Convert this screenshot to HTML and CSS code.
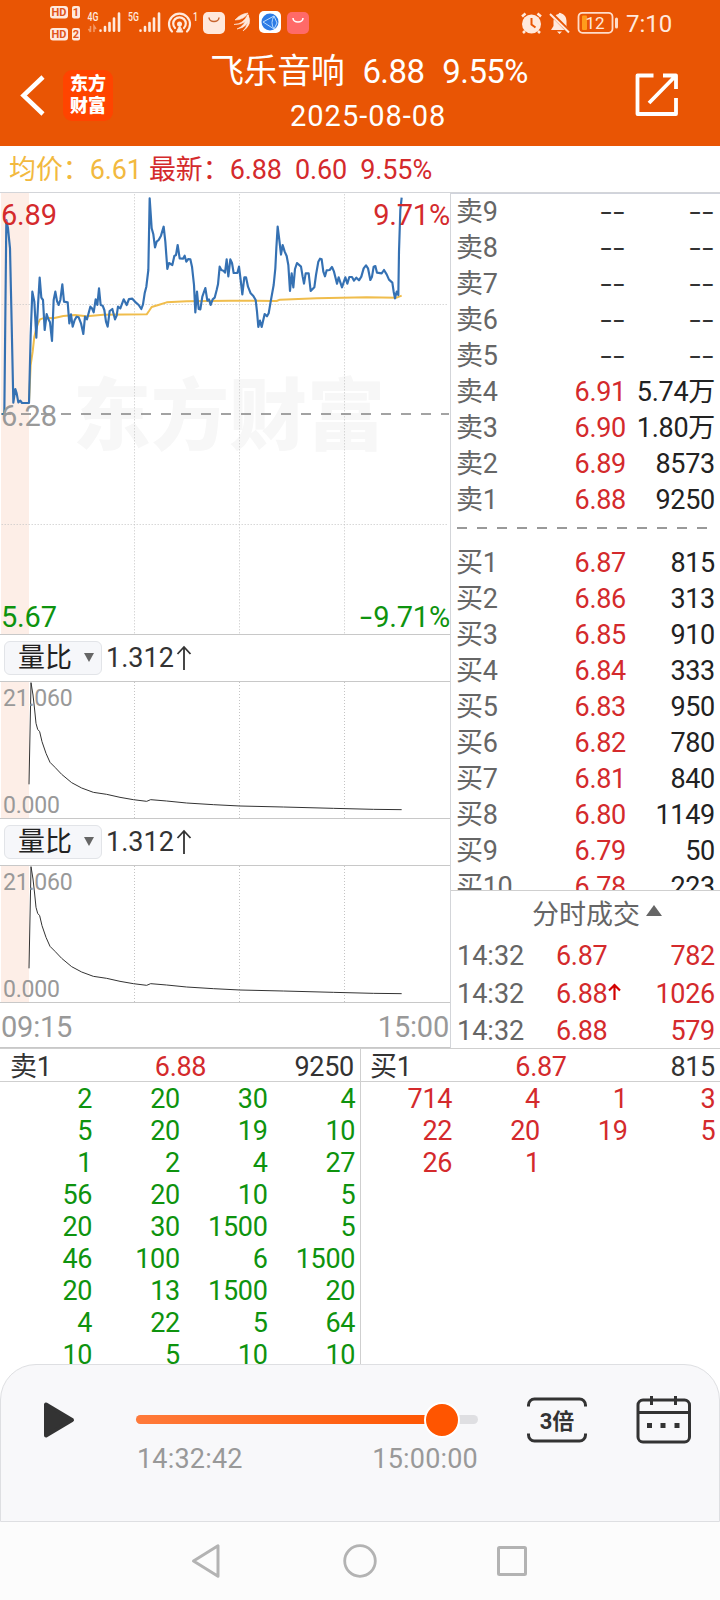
FILE: index.html
```html
<!DOCTYPE html>
<html lang="zh-CN">
<head>
    <meta charset="UTF-8">
    <meta name="viewport" content="width=device-width, initial-scale=1.0">
    <title>飞乐音响 2025-08-08</title>
    <link rel="stylesheet" href="styles.css">
</head>
<body>
    <header class="header">
        <div class="status-bar">
            <svg class="status-left" width="264" height="44" viewBox="48 0 264 44">
                <g fill="#ffe9dd">
                    <rect x="50" y="6" width="18" height="12.500" rx="3"/>
                    <rect x="72" y="6" width="8" height="12.500" rx="2"/>
                    <rect x="50" y="28" width="18" height="12.500" rx="3"/>
                    <rect x="72" y="28" width="8" height="12.500" rx="2"/>
                </g>
                <g class="hd-text">
                    <text x="59" y="16.300">HD</text><text x="76" y="16.300">1</text>
                    <text x="59" y="38.300">HD</text><text x="76" y="38.300">2</text>
                </g>
                <g class="net-text">
                    <text x="87.500" y="21">4G</text><text x="128" y="21">5G</text><text x="193" y="21">1</text>
                </g>
                <path d="M90.500 26v6M88.500 29l2 3M94 32v-6l2 3" stroke="#f39a68" stroke-width="1.500" fill="none"/>
                <g stroke="#ffe9dd" stroke-width="2.600" stroke-linecap="round">
                    <path d="M100.500 30.500v.3M105 27v3.800M109.500 23v7.800M114 18.500v12.300M119 13.500v17.300"/>
                    <path d="M140.500 30.500v.3M145 27v3.800M149.500 23v7.800M154 18.500v12.300M159 13.500v17.300"/>
                </g>
                <g fill="none" stroke="#ffe9dd" stroke-width="2.200" stroke-linecap="round">
                    <path d="M172 31.500a10.500 10.500 0 1 1 15 0M175 28a6.300 6.300 0 1 1 9 0"/>
                    <path d="M179.500 26l-3 6h6z" fill="#ffe9dd" stroke-width="1"/>
                </g>
                <circle cx="179.500" cy="24" r="2.500" fill="#ffe9dd"/>
                <rect x="203" y="12" width="22" height="22" rx="5" fill="#ffe9dd"/>
                <path d="M209 17.500a5 4 0 0 0 10 0" fill="none" stroke="#c7642f" stroke-width="1.500"/>
                <path d="M235 20q5-6 13-7-4 7-13 7zM234 24.500q9 0 14-10 0 10-14 10zM237 29q8-3 11-14 2 12-11 14zM243 31q6-6 5-16 5 9-5 16z" fill="#ffe9dd" stroke="#ffe9dd" stroke-width=".6"/>
                <rect x="259" y="11" width="22" height="22" rx="5" fill="#fff"/>
                <circle cx="270" cy="22" r="8.500" fill="#2c7be5"/>
                <path d="M263 22l11-6M263 22l11 7M274 16q-4 7 0 13M274 16l3 7-3 6" fill="none" stroke="#b9dcff" stroke-width="1"/>
                <rect x="287" y="12" width="22" height="22" rx="5" fill="#ff6a68"/>
                <path d="M293 18a5 4 0 0 0 10 0" fill="none" stroke="#fff" stroke-width="1.600"/>
            </svg>
            <svg class="status-right" width="100" height="44" viewBox="519 0 100 44">
                <circle cx="531.500" cy="24" r="9.500" fill="#ffe9dd"/>
                <path d="M531.500 18v6.500l4 3" fill="none" stroke="#e95504" stroke-width="2"/>
                <path d="M522 16.500l3.500-3M541 16.500l-3.500-3M525 31l-2 2M538 31l2 2" stroke="#ffe9dd" stroke-width="2.500"/>
                <path d="M551 30l2.500-4v-5q0-6 5-7 1-2 2-1 6 2 6 8v5l2.500 4zM557 31.500h5l-2.500 2.500z" fill="#ffe9dd"/>
                <path d="M551 13.500l19 19" stroke="#e95504" stroke-width="4"/>
                <path d="M550 14l19 18.500" stroke="#ffe9dd" stroke-width="2"/>
                <rect x="578.500" y="12.800" width="34" height="20" rx="4" fill="none" stroke="#ffdcc9" stroke-width="1.800"/>
                <rect x="582" y="15.500" width="5" height="14.500" rx="1" fill="#ff9d1c"/>
                <path d="M616.500 19v8" stroke="#ffdcc9" stroke-width="3" stroke-linecap="round"/>
                <text class="battery-text" x="595" y="29">12</text>
            </svg>
            <span class="clock">7:10</span>
        </div>
        <div class="title-bar">
            <div class="title-left">
                <svg width="28" height="44" viewBox="0 0 28 44"><path d="M23 4L3.500 22.500 23 41" fill="none" stroke="#fff" stroke-width="4.500"/></svg>
                <div class="logo">东方<br>财富</div>
            </div>
            <div class="title">
                <div class="stock"><span>飞乐音响</span><span>6.88</span><span>9.55%</span></div>
                <div class="date">2025-08-08</div>
            </div>
            <svg class="share" width="44" height="44" viewBox="0 0 44 44">
                <path d="M18.500 2.500h-16v38.500h38.500V25M28 2.500h13V16M41 2.500L14 30" fill="none" stroke="#fff" stroke-width="3.800" stroke-linejoin="round"/>
            </svg>
        </div>
    </header>

    <div class="info-bar">
        <span class="avg">均价：6.61</span>
        <span class="last">最新：6.88</span>
        <span class="last">0.60</span>
        <span class="last">9.55%</span>
    </div>

    <main class="main">
        <section class="charts">
            <div class="chart price-chart">
                <div class="watermark">东方财富</div>
                <!-- three units per pixel -->
                <svg width="450" height="441" viewBox="0 24 1350 1323">
                    <rect x="3" y="24" width="84" height="1323" fill="#fdeee7"/>
                    <g class="grid"><path d="M403.500 28V1347M718.500 28V1347M1033.500 28V1347M5 358.500H1345M5 1018.500H1345"/></g>
                    <path d="M3 687H1347" stroke="#858585" stroke-width="5" stroke-dasharray="30 30"/>
                    <polyline class="line-avg" points="87,654 92,540 98,500 103,455 109,430 114,415 120,403 135,398 160,400 190,393 225,390 260,394 310,389 440,388 447,378 455,366 475,360 500,352 560,349 690,347 830,348 840,344 950,340 1100,337 1190,338 1205,332"/>
                    <polyline class="line-price" points="6,687 13,687 19,105 24,130 30,190 34,370 40,653 46,612 50,625 55,652 61,647 66,654 87,654 92,450 97,320 103,350 109,458 114,360 119,278 124,338 129,345 134,435 140,387 145,402 150,412 156,468 161,345 166,320 171,348 176,360 181,345 187,298 192,350 203,352 208,415 213,388 218,425 224,405 230,395 236,397 243,415 250,447 255,395 261,403 271,365 276,370 281,382 287,343 292,360 297,310 302,360 308,362 313,375 318,410 323,425 329,378 337,372 345,403 350,392 354,365 361,370 371,343 380,360 387,342 397,341 408,353 416,360 424,372 429,358 434,325 439,305 445,255 449,40 455,130 460,148 465,187 470,170 476,165 483,152 491,125 496,170 502,252 507,234 517,240 523,213 528,210 533,180 539,220 549,221 554,212 559,230 565,222 571,223 576,245 582,300 586,382 591,320 596,372 601,373 607,335 616,309 622,347 627,343 632,360 638,343 644,338 650,315 654,298 659,245 664,255 670,257 675,263 680,223 685,274 691,223 696,234 701,264 712,264 717,245 722,285 727,328 733,277 738,277 744,305 752,325 760,333 767,345 771,380 775,426 780,407 785,426 794,387 801,394 806,385 812,350 821,300 826,250 829,190 833,125 838,165 843,209 848,180 854,200 860,213 865,240 870,318 875,265 880,307 885,252 891,234 903,245 908,275 912,296 917,265 926,265 932,318 943,307 948,270 955,230 960,221 965,223 970,260 975,274 980,256 989,255 996,246 1002,260 1011,296 1016,277 1026,307 1036,277 1042,296 1048,276 1056,276 1062,287 1069,278 1077,286 1084,275 1091,250 1098,241 1104,250 1111,285 1116,275 1121,245 1126,243 1131,263 1145,265 1152,255 1160,268 1167,284 1177,293 1181,320 1185,340 1190,320 1195,330 1197,200 1201,75 1205,38"/>
                </svg>
                <span class="mark top-left red">6.89</span>
                <span class="mark top-right red">9.71%</span>
                <span class="mark mid-left">6.28</span>
                <span class="mark bottom-left green">5.67</span>
                <span class="mark bottom-right green"><span class="dash">-</span>9.71%</span>
            </div>

            <div class="ratio-head">
                <div class="ratio-select">量比<i class="caret-down"></i></div>
                <span>1.312</span>
                <svg width="16" height="26" viewBox="0 0 16 26"><path d="M8 25V2M1.500 9L8 2l6.500 7" fill="none" stroke="#333" stroke-width="1.800"/></svg>
            </div>
            <div class="chart ratio-chart">
                <svg width="450" height="136" viewBox="0 246 1350 408">
                    <g id="ratio">
                        <rect x="3" y="246" width="84" height="408" fill="#fdeee7"/>
                        <g class="grid"><path d="M403.500 246V654M718.500 246V654M1033.500 246V654"/></g>
                        <polyline class="line-ratio" points="87,553 93,248 99,285 104,330 108,370 113,388 119,395 126,425 138,460 150,487 165,502 185,523 215,548 245,564 280,577 320,583 360,592 400,599 440,604 452,599 500,603 560,609 640,614 720,618 850,621 1000,625 1120,628 1205,629"/>
                    </g>
                </svg>
                <span class="mark small-top">21.060</span>
                <span class="mark small-bottom">0.000</span>
            </div>

            <div class="ratio-head">
                <div class="ratio-select">量比<i class="caret-down"></i></div>
                <span>1.312</span>
                <svg width="16" height="26" viewBox="0 0 16 26"><path d="M8 25V2M1.500 9L8 2l6.500 7" fill="none" stroke="#333" stroke-width="1.800"/></svg>
            </div>
            <div class="chart ratio-chart">
                <svg width="450" height="136" viewBox="0 246 1350 408"><use href="#ratio"/></svg>
                <span class="mark small-top">21.060</span>
                <span class="mark small-bottom">0.000</span>
            </div>
            <div class="time-axis"><span>09:15</span><span>15:00</span></div>
        </section>

        <section class="side">
            <div class="book">
                <div class="row"><span>卖9</span><b class="empty">--</b><em class="empty">--</em></div>
                <div class="row"><span>卖8</span><b class="empty">--</b><em class="empty">--</em></div>
                <div class="row"><span>卖7</span><b class="empty">--</b><em class="empty">--</em></div>
                <div class="row"><span>卖6</span><b class="empty">--</b><em class="empty">--</em></div>
                <div class="row"><span>卖5</span><b class="empty">--</b><em class="empty">--</em></div>
                <div class="row"><span>卖4</span><b>6.91</b><em>5.74万</em></div>
                <div class="row"><span>卖3</span><b>6.90</b><em>1.80万</em></div>
                <div class="row"><span>卖2</span><b>6.89</b><em>8573</em></div>
                <div class="row"><span>卖1</span><b>6.88</b><em>9250</em></div>
                <div class="divider"></div>
                <div class="row"><span>买1</span><b>6.87</b><em>815</em></div>
                <div class="row"><span>买2</span><b>6.86</b><em>313</em></div>
                <div class="row"><span>买3</span><b>6.85</b><em>910</em></div>
                <div class="row"><span>买4</span><b>6.84</b><em>333</em></div>
                <div class="row"><span>买5</span><b>6.83</b><em>950</em></div>
                <div class="row"><span>买6</span><b>6.82</b><em>780</em></div>
                <div class="row"><span>买7</span><b>6.81</b><em>840</em></div>
                <div class="row"><span>买8</span><b>6.80</b><em>1149</em></div>
                <div class="row"><span>买9</span><b>6.79</b><em>50</em></div>
                <div class="row"><span>买10</span><b>6.78</b><em>223</em></div>
            </div>
            <div class="trades">
                <div class="trades-head">分时成交<i class="caret-up"></i></div>
                <div class="trade"><span>14:32</span><b>6.87</b><em>782</em></div>
                <div class="trade"><span>14:32</span><b>6.88<svg width="13" height="18" viewBox="0 0 13 18"><path d="M6.500 17V2M1 7.500L6.500 2 12 7.500" fill="none" stroke="#d20000" stroke-width="2.200"/></svg></b><em>1026</em></div>
                <div class="trade"><span>14:32</span><b>6.88</b><em>579</em></div>
            </div>
        </section>
    </main>

    <section class="queues">
        <div class="queue sell">
            <div class="queue-head"><span>卖1</span><b>6.88</b><em>9250</em></div>
            <div class="cells">
                <span>2</span><span>20</span><span>30</span><span>4</span>
                <span>5</span><span>20</span><span>19</span><span>10</span>
                <span>1</span><span>2</span><span>4</span><span>27</span>
                <span>56</span><span>20</span><span>10</span><span>5</span>
                <span>20</span><span>30</span><span>1500</span><span>5</span>
                <span>46</span><span>100</span><span>6</span><span>1500</span>
                <span>20</span><span>13</span><span>1500</span><span>20</span>
                <span>4</span><span>22</span><span>5</span><span>64</span>
                <span>10</span><span>5</span><span>10</span><span>10</span>
            </div>
        </div>
        <div class="queue buy">
            <div class="queue-head"><span>买1</span><b>6.87</b><em>815</em></div>
            <div class="cells">
                <span>714</span><span>4</span><span>1</span><span>3</span>
                <span>22</span><span>20</span><span>19</span><span>5</span>
                <span>26</span><span>1</span>
            </div>
        </div>
    </section>

    <footer class="player">
        <svg class="play" width="32" height="38" viewBox="0 0 32 38"><path d="M2 3.500v31L28 19z" fill="#333" stroke="#333" stroke-width="4" stroke-linejoin="round"/></svg>
        <div class="progress">
            <div class="track"><div class="fill"></div><div class="thumb"></div></div>
            <div class="times"><span>14:32:42</span><span>15:00:00</span></div>
        </div>
        <svg class="speed" width="60" height="46" viewBox="0 0 60 46">
            <path d="M1.500 9.500V8a6 6 0 0 1 6-6h45a6 6 0 0 1 6 6v1.500M1.500 36.500V38a6 6 0 0 0 6 6h45a6 6 0 0 0 6-6v-1.500" fill="none" stroke="#333" stroke-width="3"/>
            <text x="30" y="32">3倍</text>
        </svg>
        <svg class="calendar" width="56" height="48" viewBox="0 0 56 48">
            <rect x="2" y="4" width="51.500" height="42" rx="5" fill="none" stroke="#333" stroke-width="3"/>
            <path d="M2 16.500h51.500M15.500 0v9M39.500 0v9" fill="none" stroke="#333" stroke-width="3"/>
            <path d="M11 27h5v5h-5zM24.500 27h5v5h-5zM38.500 27h5v5h-5z" fill="#333"/>
        </svg>
    </footer>

    <nav class="nav">
        <svg width="30" height="34" viewBox="0 0 30 34"><path d="M26 1.800v30.400L1.500 17z" fill="none" stroke="#b3b3b3" stroke-width="3" stroke-linejoin="round"/></svg>
        <svg width="34" height="34" viewBox="0 0 34 34"><circle cx="17" cy="17" r="15.300" fill="none" stroke="#b3b3b3" stroke-width="2.800"/></svg>
        <svg width="30" height="34" viewBox="1 0 30 34"><rect x="1.500" y="3.500" width="27" height="27" rx="1" fill="none" stroke="#b3b3b3" stroke-width="3"/></svg>
    </nav>
</body>
</html>
```
FILE: styles.css
```css
* {
    box-sizing: border-box;
}
body {
    margin: 0;
    width: 720px;
    height: 1600px;
    display: flex;
    flex-direction: column;
    overflow: hidden;
    background: #fff;
    color: #222;
    font-family: Roboto, "Noto Sans CJK SC", sans-serif;
    font-size: 27px;
    line-height: 36px;
}
svg {
    display: block;
    flex: none;
    overflow: visible;
}
b, em, i {
    font-weight: normal;
    font-style: normal;
}

/* header */
.header {
    height: 146px;
    background: #e95504;
    color: #fff;
}
.status-bar {
    display: flex;
    height: 44px;
    padding-left: 48px;
}
.status-right {
    margin-left: 207px;
}
.clock {
    margin-left: 7px;
    font-size: 24px;
    line-height: 48px;
    color: #ffe9dd;
}
.hd-text {
    font-size: 11px;
    font-weight: bold;
    fill: #e0551a;
    text-anchor: middle;
}
.net-text {
    font-size: 12.5px;
    font-weight: 500;
    fill: #ffe9dd;
}
.net-text text {
    transform-box: fill-box;
    transform: scaleX(.7);
}
.battery-text {
    font-size: 17px;
    text-anchor: middle;
    fill: #ffe9dd;
}
.title-bar {
    display: grid;
    grid-template-columns: 180px 1fr 180px;
    height: 102px;
}
.title-left {
    display: flex;
    align-items: center;
    gap: 15px;
    padding-left: 20px;
}
.logo {
    width: 50px;
    height: 51px;
    padding-top: 3px;
    border-radius: 9px;
    background: #ff4400;
    font-size: 18px;
    font-weight: 900;
    line-height: 22px;
    text-align: center;
}
.title {
    padding: 2px 0 0 18px;
}
.stock {
    display: flex;
    gap: 18px;
    padding-left: 12px;
    font-size: 33px;
    line-height: 51px;
    letter-spacing: -.6px;
    white-space: nowrap;
}
.stock span:first-child {
    font-size: 34px;
    letter-spacing: -.4px;
}
.date {
    margin-top: -1px;
    padding-left: 92px;
    font-size: 29px;
    line-height: 41px;
    letter-spacing: 1px;
}
.share {
    align-self: center;
    justify-self: end;
    margin-right: 41px;
}

.info-bar {
    display: flex;
    gap: 13px;
    height: 47px;
    padding-left: 9px;
    border-bottom: 1px solid #d3d5d9;
    line-height: 49px;
    letter-spacing: -.1px;
    white-space: nowrap;
}
.avg {
    margin-right: -6px;
    color: #f2b93f;
}
.last {
    color: #d42a2c;
}

/* charts */
.main {
    display: flex;
    height: 856px;
    border-bottom: 1px solid #cfcfcf;
}
.charts {
    width: 450px;
}
.chart {
    position: relative;
    border-bottom: 1px solid #c8c8c8;
}
.price-chart {
    height: 442px;
}
.price-chart svg {
    position: relative;
}
.ratio-chart {
    height: 137px;
}
.watermark {
    position: absolute;
    left: 73px;
    top: 167px;
    font-size: 78px;
    font-weight: 900;
    line-height: 116px;
    color: #f7f7f7;
}
.grid path {
    fill: none;
    stroke: #c4c4c4;
    stroke-width: 3;
    stroke-dasharray: 3 6;
}
.line-price, .line-avg, .line-ratio {
    fill: none;
    stroke-linejoin: round;
}
.line-price {
    stroke: #3571b3;
    stroke-width: 6.5;
}
.line-avg {
    stroke: #f0bd4c;
    stroke-width: 6;
}
.line-ratio {
    stroke: #333;
    stroke-width: 3;
}
.mark {
    position: absolute;
    color: #999;
    font-size: 29px;
    line-height: 30px;
    letter-spacing: -.2px;
}
.mark.red {
    color: #d42a2c;
}
.mark.green {
    color: #0e930e;
}
.top-left {
    left: 1px;
    top: 7px;
}
.top-right {
    right: 0;
    top: 7px;
}
.mid-left {
    left: 1px;
    top: 208px;
}
.bottom-left {
    left: 1px;
    bottom: 2px;
}
.bottom-right {
    right: 0;
    bottom: 2px;
}
.dash {
    display: inline-block;
    margin-right: 1px;
    transform: scaleX(1.5);
    transform-origin: right;
}
.small-top, .small-bottom {
    left: 3px;
    font-size: 23px;
}
.small-top {
    top: 2px;
}
.small-bottom {
    bottom: -3px;
}
.ratio-head {
    display: flex;
    align-items: center;
    height: 47px;
    padding: 0 0 1px 4px;
    border-bottom: 1px solid #c8c8c8;
    color: #333;
}
.ratio-head svg {
    margin-left: 2px;
}
.ratio-select {
    display: flex;
    align-items: center;
    justify-content: space-between;
    width: 98px;
    height: 34px;
    margin-right: 4px;
    padding: 0 7px 0 13px;
    border: 1px solid #e2e4e8;
    border-radius: 6px;
    background: #f6f7fa;
    color: #222;
}
.caret-down {
    border: 5.5px solid transparent;
    border-top: 9px solid #666;
    border-bottom: 0;
}
.time-axis {
    display: flex;
    justify-content: space-between;
    height: 45px;
    padding: 0 1px;
    border-bottom: 1px solid #c8c8c8;
    color: #999;
    font-size: 29px;
    line-height: 49px;
    letter-spacing: -.2px;
}

/* order book */
.side {
    flex: 1;
    border-left: 1px solid #d3d5d9;
    letter-spacing: -.3px;
}
.book {
    height: 698px;
    border-top: 1px solid #d0d3dc;
    border-bottom: 1px solid #cfcfcf;
    overflow: hidden;
}
.row {
    display: grid;
    grid-template-columns: 70px 99px 1fr;
    height: 36px;
    padding: 0 5px;
}
.row span, .trade span {
    color: #666;
}
.row b {
    padding-left: 1px;
    margin-right: -1px;
}
.row b, .row em {
    text-align: right;
}
.row b, .trade b, .trade em, .queue-head b {
    color: #d42a2c;
}
.row .empty {
    justify-self: end;
    color: #333;
    letter-spacing: 1px;
    transform: scaleX(1.5);
    transform-origin: right;
}
.divider {
    height: 2px;
    margin: 9px 12px 16px 6px;
    background: repeating-linear-gradient(90deg, #999 0 10px, transparent 10px 20px);
}
.trades-head {
    display: flex;
    justify-content: center;
    align-items: center;
    gap: 6px;
    height: 46px;
    padding: 1px 0 0 23px;
    color: #666;
    letter-spacing: 0;
}
.caret-up {
    margin-top: -9px;
    border: 8px solid transparent;
    border-top: 0;
    border-bottom: 11px solid #666;
}
.trade {
    display: grid;
    grid-template-columns: 98px 90px 1fr;
    height: 37.5px;
    padding: 0 5px 0 6px;
    line-height: 39px;
}
.trade span {
    letter-spacing: 0;
}
.trade b {
    display: flex;
    gap: 1px;
    padding-left: 1px;
}
.trade svg {
    margin-top: 8px;
}
.trade em {
    text-align: right;
}

/* order queues */
.queues {
    display: flex;
    height: 315px;
    overflow: hidden;
    letter-spacing: -.3px;
}
.queue {
    width: 361px;
    flex: none;
}
.sell {
    border-right: 1px solid #cfcfcf;
}
.queue-head {
    display: grid;
    grid-template-columns: 1fr 1fr 1fr;
    height: 33px;
    padding: 0 6px 0 10px;
    border-bottom: 1px solid #cfcfcf;
    color: #333;
    line-height: 36px;
}
.queue-head b {
    margin-left: -3px;
    text-align: center;
}
.queue-head em {
    text-align: right;
}
.cells {
    display: grid;
    grid-template-columns: repeat(4, 87.7px);
    padding: 1px 0 0 4.5px;
    line-height: 32px;
    text-align: right;
    color: #0e930e;
}
.buy {
    width: 359px;
}
.buy .queue-head {
    padding: 0 5px 0 9px;
}
.buy .cells {
    color: #d42a2c;
    padding-left: 3.5px;
}

/* player */
.player {
    display: flex;
    height: 158px;
    padding: 31px 27px 0 43px;
    border: 1px solid #dedfe2;
    border-radius: 36px 36px 0 0;
    background: #f8f8fa;
}
.play {
    margin-top: 5px;
}
.progress {
    width: 342px;
    margin: 19px 0 0 60px;
}
.track {
    position: relative;
    height: 9px;
    border-radius: 5px;
    background: #dfdfe2;
}
.fill {
    width: 306px;
    height: 9px;
    border-radius: 5px;
    background: linear-gradient(90deg, #ff7a3a, #ff5500);
}
.thumb {
    position: absolute;
    left: 288px;
    top: -13px;
    width: 36px;
    height: 36px;
    border: 2px solid #fff;
    border-radius: 50%;
    background: #ff5500;
}
.times {
    display: flex;
    justify-content: space-between;
    margin-top: 18px;
    padding-left: 1px;
    line-height: 34px;
    letter-spacing: .2px;
    color: #999;
}
.speed {
    margin: 1px 0 0 49px;
}
.speed text {
    font-size: 22px;
    font-weight: bold;
    text-anchor: middle;
    fill: #333;
}
.calendar {
    margin: 0 0 0 49px;
}

.nav {
    display: flex;
    justify-content: center;
    gap: 121px;
    flex: 1;
    padding-top: 22px;
    background: #fcfcfc;
}
```
